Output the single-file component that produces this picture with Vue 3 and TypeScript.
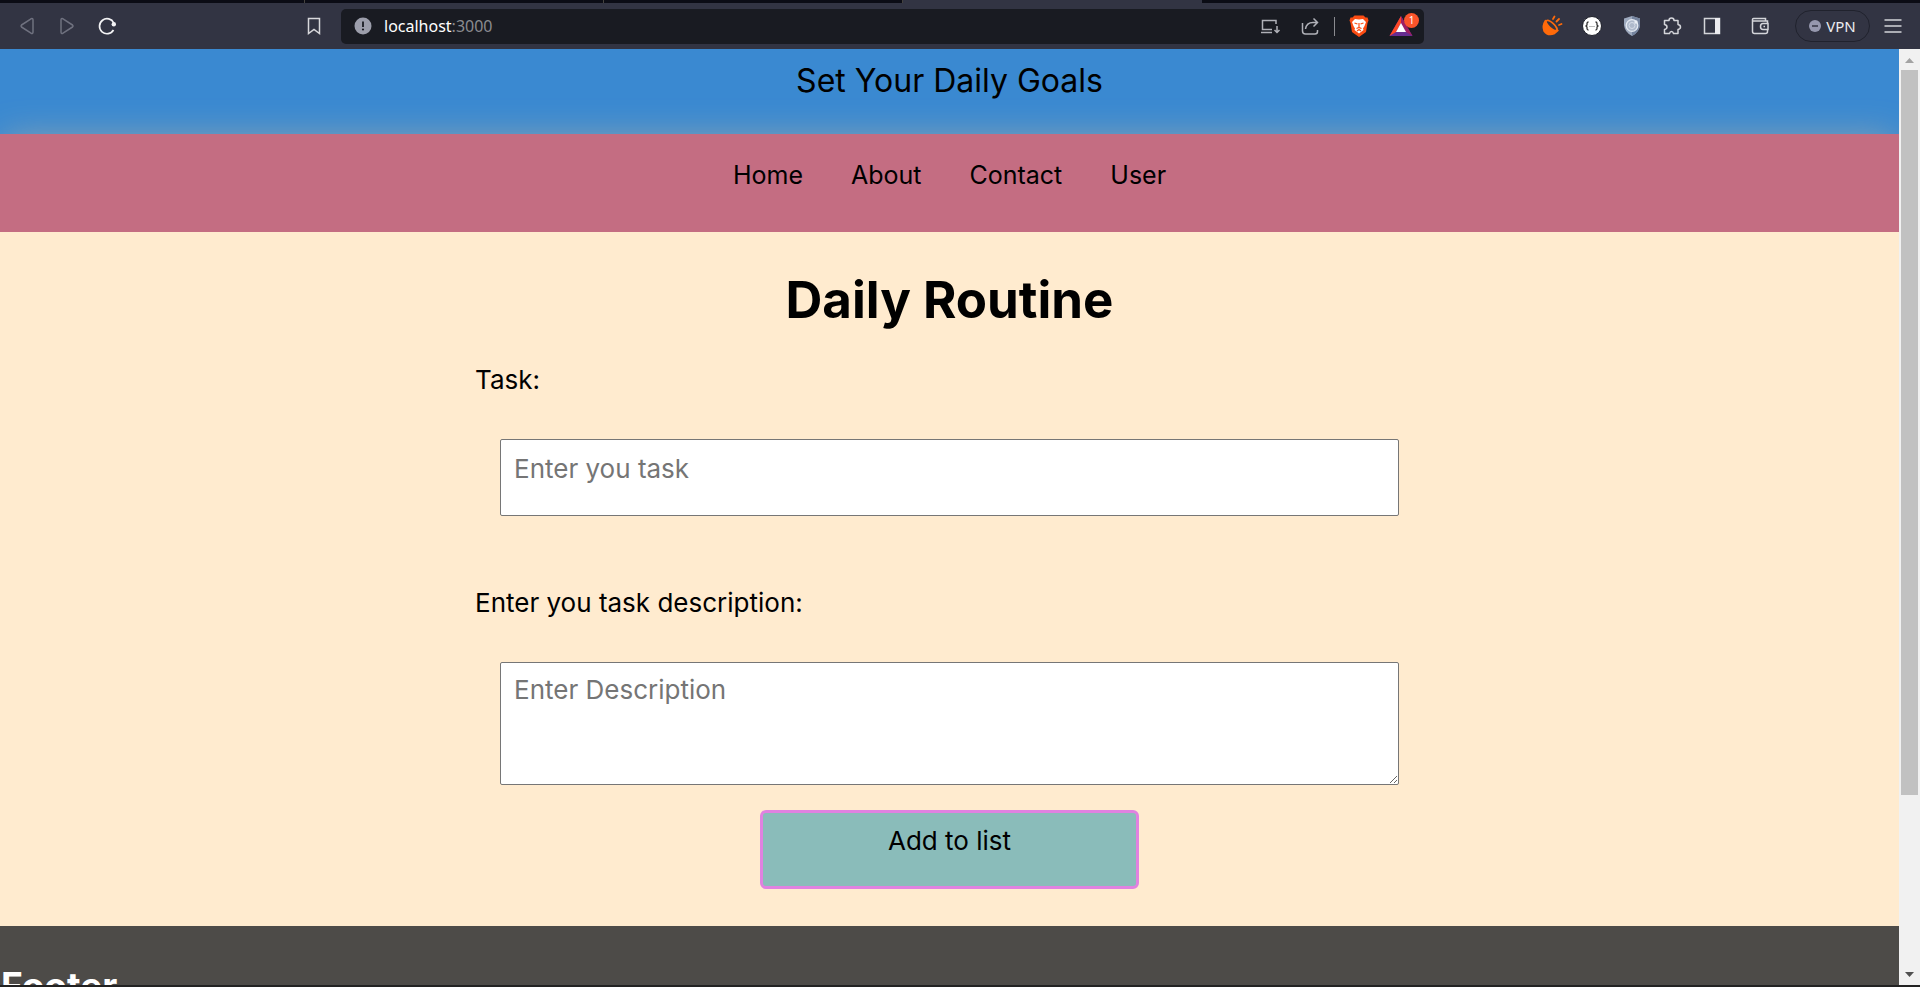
<script setup lang="ts">
import { ref } from 'vue'

const links: string[] = ['Home', 'About', 'Contact', 'User']
const task = ref('')
const description = ref('')
</script>

<template>
  <div class="window">
    <div class="tabs"><span class="first"></span><span></span><span></span><span class="current"></span><span class="rest"></span></div>
    <div class="toolbar">
      <div class="left">
        <button class="icon" aria-label="Back"><svg width="24" height="24" viewBox="0 0 24 24" fill="none" stroke="#6f717f" stroke-width="1.5" stroke-linejoin="round"><path d="M16 4.800Q18 4 18 6V18Q18 20 16 19.200L6.500 13Q5.500 12 6.500 11Z" /></svg></button>
        <button class="icon" aria-label="Forward"><svg width="24" height="24" viewBox="0 0 24 24" fill="none" stroke="#6f717f" stroke-width="1.500" stroke-linejoin="round"><path d="M8 4.800Q6 4 6 6V18Q6 20 8 19.200L17.500 13Q18.500 12 17.500 11Z" /></svg></button>
        <button class="icon" aria-label="Reload"><svg width="24" height="24" viewBox="0 0 24 24" fill="none" stroke="#f3f3f5" stroke-width="1.700"><path d="M18.800 9A7.500 7.500 0 1 0 18.500 16" /><circle cx="18.800" cy="10.300" r="2.200" fill="#f3f3f5" stroke="none" /></svg></button>
        <button class="icon bookmark" aria-label="Bookmark"><svg width="24" height="24" viewBox="0 0 24 24" fill="none" stroke="#d8d8dc" stroke-width="1.500"><path d="M6.500 4.500H17.500V19.500L12 15.500L6.500 19.500Z" /></svg></button>
      </div>
      <div class="address">
        <svg width="18" height="18" viewBox="0 0 18 18"><circle cx="9" cy="9" r="8.500" fill="#9c9eab" /><path d="M9 4.500V10" stroke="#191b22" stroke-width="1.800" /><circle cx="9" cy="12.500" r="1.100" fill="#191b22" /></svg>
        <p class="url">localhost<span>:3000</span></p>
        <button class="icon" aria-label="Install app"><svg width="24" height="24" viewBox="0 0 24 24" fill="none" stroke="#b0b1b8" stroke-width="1.500"><path d="M18 10V6.500H4.500V15.500H14M3 18.500H14M19 12V18M16.500 16L19 18.500L21.500 16" /></svg></button>
        <button class="icon share" aria-label="Share"><svg width="24" height="24" viewBox="0 0 24 24" fill="none" stroke="#b0b1b8" stroke-width="1.500"><path d="M4.500 9V17Q4.500 20 7.500 20H17Q19.500 20 19.500 17.500V16M7.500 15Q8.500 8.500 15 8.500H19M15.500 4.500L19.500 8.500L15.500 12.500" /></svg></button>
        <i class="rule"></i>
        <button class="icon brave" aria-label="Shields"><svg width="20" height="24" viewBox="0 0 20 24"><path d="M5.500 1.500H14.500L16.500 3.500L18.500 3.500L19.500 6.500L18.500 9L17 18L10 23L3 18L1.500 9L.5 6.500L1.500 3.500H3.500Z" fill="#fb4c13" /><path d="M6 5L10 5.500L14 5L17 8L15.500 12L14 14.500L14.500 16L10 19.500L5.500 16L6 14.500L4.500 12L3 8Z" fill="#fff" /><path d="M5.500 9L8.500 10M14.500 9L11.500 10M10 9V13M7.500 14.500L10 13.500L12.500 14.500M8 17L10 15.500L12 17" stroke="#fb4c13" stroke-width="1.200" fill="none" /></svg></button>
        <button class="icon rewards" aria-label="Rewards"><svg width="24" height="22" viewBox="0 0 24 22"><path d="M12 1L23.500 21H.5Z" fill="#662d91" /><path d="M12 1L.5 21L7 17L12 8Z" fill="#ff4724" /><path d="M12 1L23.500 21L17 17L12 8Z" fill="#9e1f63" /><path d="M12 8L17 17H7Z" fill="#fff" /></svg><b>1</b></button>
      </div>
      <div class="right">
        <button class="icon" aria-label="Extension"><svg width="24" height="24" viewBox="0 0 24 24"><path d="M5.500 6.500Q2 12 4 17Q8 22.500 14.500 19.500L18 16.500Z" fill="#ff6a0a" stroke="#ff6a0a" stroke-width="1.500" stroke-linejoin="round" /><ellipse cx="11.500" cy="11.500" rx="7" ry="2.600" transform="rotate(43 11.500 11.500)" fill="#323443" stroke="#ff6a0a" stroke-width="1.600" /><path d="M13 5L14.500 2.500M16.500 7.500L19 5M19 11L21.500 10" stroke="#ff6a0a" stroke-width="1.800" stroke-linecap="round" /></svg></button>
        <button class="icon" aria-label="JSON viewer"><svg width="24" height="24" viewBox="0 0 24 24"><circle cx="12" cy="12" r="9.500" fill="#fff" stroke="#20222b" /><path d="M8.500 8Q7 8 7 9.500V11L6 12L7 13V14.500Q7 16 8.500 16M15.500 8Q17 8 17 9.500V11L18 12L17 13V14.500Q17 16 15.500 16" fill="none" stroke="#333" stroke-width="1.300" /><path d="M9.500 12.500H15" stroke="#777" stroke-dasharray="1 1" /></svg></button>
        <button class="icon" aria-label="Privacy shield"><svg width="24" height="24" viewBox="0 0 24 24"><path d="M12 2L20 4.500V11Q19.500 18 12 22Q4.500 18 4 11V4.500Z" fill="#9da9be" /><path d="M12 2L20 4.500V11Q19.500 18 12 22Z" fill="#75849f" /><circle cx="12" cy="11.500" r="5.800" fill="#aeb9cb" stroke="#e4e9f2" stroke-width="1.300" /><circle cx="12" cy="11.500" r="3" fill="none" stroke="#d5dce8" /><circle cx="16" cy="8" r="1.700" fill="#e9edf4" /></svg></button>
        <button class="icon" aria-label="Extensions"><svg width="24" height="24" viewBox="0 0 24 24" fill="none" stroke="#d4d5da" stroke-width="1.500" stroke-linejoin="round"><path d="M4.500 6.500H9Q9 4 11.500 4T14 6.500H18V10.500Q20.500 11 20.500 13T18 15.500V19.500H13.500Q13 17.500 11.500 17.500T9.500 19.500H4.500V15.500Q7 15 7 13T4.500 10.500Z" /></svg></button>
        <button class="icon" aria-label="Sidebar"><svg width="24" height="24" viewBox="0 0 24 24"><rect x="4.500" y="4.500" width="15" height="15" fill="none" stroke="#d4d5da" stroke-width="1.500" /><path d="M15 4H20V20H15Z" fill="#ececf0" /></svg></button>
        <button class="icon wallet" aria-label="Wallet"><svg width="24" height="24" viewBox="0 0 24 24" fill="none" stroke="#d4d5da" stroke-width="1.500"><path d="M19.500 9V7H4.500V17.500Q4.500 19.500 6.500 19.500H17.500Q19.500 19.500 19.500 17.500V16M4.500 7V5.500Q4.500 4.500 5.500 4.500H17.500V7M20 9.500H15Q12.500 9.500 12.500 12.500T15 15.500H20ZM15.500 12.500H17" /></svg></button>
        <button class="vpn"><svg width="12" height="12" viewBox="0 0 12 12"><circle cx="6" cy="6" r="6" fill="#9698ae" /><path d="M3 6H9" stroke="#323443" stroke-width="1.500" /></svg>VPN</button>
        <button class="icon" aria-label="Menu"><svg width="24" height="24" viewBox="0 0 24 24" stroke="#d4d5da" stroke-width="1.500"><path d="M3.500 6H20.500M3.500 12H20.500M3.500 18H20.500" /></svg></button>
      </div>
    </div>

    <div class="viewport">
      <div class="page">
        <header>Set Your Daily Goals</header>
        <nav><a v-for="link in links" :key="link" href="#">{{ link }}</a></nav>
        <main>
          <h1>Daily Routine</h1>
          <form @submit.prevent>
            <label for="task">Task:</label>
            <input id="task" v-model="task" type="text" placeholder="Enter you task" />
            <label for="description">Enter you task description:</label>
            <textarea id="description" v-model="description" placeholder="Enter Description"></textarea>
            <button class="add" type="submit">Add to list</button>
          </form>
        </main>
        <footer><h2>Footer</h2></footer>
      </div>
      <div class="scrollbar">
        <svg width="9" height="5" viewBox="0 0 9 5"><path d="M0 5L4.500 0L9 5Z" fill="#a3a3a3" /></svg>
        <div class="track"><div class="thumb"></div></div>
        <svg width="9" height="5" viewBox="0 0 9 5"><path d="M0 0L4.500 5L9 0Z" fill="#505050" /></svg>
      </div>
    </div>
  </div>
</template>

<style>
body {
  margin: 0;
}
</style>

<style scoped>
* {
  box-sizing: border-box;
}
.window {
  height: 100vh;
  display: flex;
  flex-direction: column;
  overflow: hidden;
  border-bottom: 2px solid #222;
  font-family: Inter, "Open Sans", sans-serif;
}
button {
  font: inherit;
  color: inherit;
  border: 0;
  background: none;
  padding: 0;
}
.tabs {
  flex: none;
  height: 3px;
  display: flex;
  background: #0b0c15;
}
.tabs span {
  width: 299px;
  border-right: 1px solid #45433f;
}
.tabs .first {
  width: 305px;
}
.tabs .current {
  border: 0;
  background: #323443;
}
.tabs .rest {
  flex: 1;
  border: 0;
}
.toolbar {
  flex: none;
  height: 46px;
  padding: 0 15px;
  display: flex;
  align-items: center;
  background: #323443;
  font-family: "Noto Sans", sans-serif;
}
.icon {
  flex: none;
  width: 24px;
  height: 24px;
  display: grid;
  place-items: center;
}
.left {
  flex: none;
  width: 326px;
  display: flex;
  gap: 16px;
}
.bookmark {
  margin-left: auto;
  margin-right: 15px;
}
.address {
  flex: 1;
  max-width: 1083px;
  height: 35px;
  padding: 0 5px 0 13px;
  display: flex;
  align-items: center;
  border-radius: 5px;
  background: #191b22;
}
.url {
  flex: 1;
  margin: 0 0 0 12px;
  font-size: 16px;
  color: #fff;
}
.url span {
  color: #8a8b90;
}
.share {
  margin-left: 16px;
}
.rule {
  width: 1px;
  height: 19px;
  margin: 0 14px 0 12px;
  background: #8a8b90;
}
.brave {
  width: 20px;
}
.rewards {
  position: relative;
  width: 30px;
  margin-left: 20px;
  justify-items: start;
}
.rewards b {
  position: absolute;
  top: -1px;
  right: 0;
  width: 15px;
  height: 15px;
  border-radius: 8px;
  background: #fb542b;
  color: #fff;
  font-size: 10px;
  line-height: 15px;
  font-weight: 400;
}
.right {
  margin-left: auto;
  display: flex;
  align-items: center;
  gap: 16px;
}
.wallet {
  margin-left: 8px;
}
.vpn {
  width: 75px;
  height: 32px;
  margin-left: 7px;
  margin-right: -5px;
  display: flex;
  align-items: center;
  justify-content: center;
  gap: 5px;
  border: 1px solid #20222d;
  border-radius: 16px;
  color: #ececf0;
  font-size: 15px;
}
.viewport {
  flex: 1;
  min-height: 0;
  display: flex;
}
.page {
  flex: 1;
  overflow: hidden;
  font-size: 25px;
  line-height: 40px;
  color: #000;
}
header {
  height: 85px;
  padding-top: 12px;
  background: #3a89d1;
  font-size: 32px;
  text-align: center;
}
nav {
  height: 98px;
  padding-top: 21px;
  display: flex;
  justify-content: center;
  gap: 48px;
  background: #c46d82;
  box-shadow: 0 0 36px -4px #8fa5b0;
}
nav a {
  color: #000;
  text-decoration: none;
}
main {
  padding: 32px 16px 37px;
  background: #ffebcf;
}
h1 {
  margin: 0;
  font-size: 51px;
  line-height: 72px;
  text-align: center;
}
form {
  max-width: 949px;
  margin: 24px auto 0;
  display: flex;
  flex-direction: column;
  font-size: 26px;
}
input,
textarea {
  width: auto;
  margin: 39px 25px 0;
  border: 1px solid #767676;
  border-radius: 2px;
  background: #fff;
  color: #000;
  font: inherit;
  outline: 0;
}
input {
  height: 77px;
  padding: 0 13px 18px;
  margin-bottom: 67px;
}
textarea {
  height: 123px;
  padding: 7px 13px;
}
::placeholder {
  color: #757575;
}
.add {
  align-self: center;
  width: 40%;
  height: 79px;
  margin-top: 25px;
  padding-bottom: 18px;
  border: 3px solid #e082e0;
  border-radius: 6px;
  background: #8abcba;
  color: #000;
}
footer {
  padding: 32px 1px;
  background: #4d4b48;
  color: #fff;
}
h2 {
  margin: 0;
  font-size: 37px;
  line-height: 56px;
}
.scrollbar {
  flex: none;
  width: 21px;
  padding: 9px 2px 8px;
  display: flex;
  flex-direction: column;
  align-items: center;
  background: #f1f1f1;
}
.track {
  flex: 1;
  width: 17px;
  margin: 7px 0;
}
.thumb {
  height: 81%;
  background: #c1c1c1;
}
</style>
